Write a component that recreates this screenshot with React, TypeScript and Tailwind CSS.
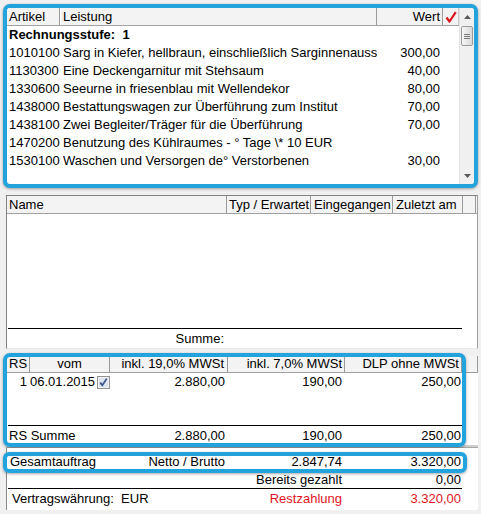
import React from 'react';

type Item = { code: string; text: string; value: string };

const items: Item[] = [
  { code: '1010100', text: 'Sarg in Kiefer, hellbraun, einschließlich Sarginnenausstattung', value: '300,00' },
  { code: '1130300', text: 'Eine Deckengarnitur mit Stehsaum', value: '40,00' },
  { code: '1330600', text: 'Seeurne in friesenblau mit Wellendekor', value: '80,00' },
  { code: '1438000', text: 'Bestattungswagen zur Überführung zum Institut', value: '70,00' },
  { code: '1438100', text: 'Zwei Begleiter/Träger für die Überführung', value: '70,00' },
  { code: '1470200', text: 'Benutzung des Kühlraumes - ° Tage \\* 10 EUR', value: '' },
  { code: '1530100', text: 'Waschen und Versorgen de° Verstorbenen', value: '30,00' },
];

const RedCheck = () => (
  <svg width="12" height="12" viewBox="0 0 12 12">
    <path d="M1.5 6.5 L4.5 10.5 L10.8 1.2" fill="none" stroke="#e0141e" strokeWidth="2.2" strokeLinejoin="round" />
  </svg>
);

const BoxCheck = () => (
  <svg width="13" height="13" viewBox="0 0 13 13">
    <rect x="0.5" y="0.5" width="12" height="12" fill="#f6f6f6" stroke="#8e8f8f" />
    <rect x="2" y="2" width="9" height="9" fill="#dde4ee" />
    <path d="M3.2 6.6 L5.4 9.2 L9.8 2.6" fill="none" stroke="#3d5492" strokeWidth="1.8" />
  </svg>
);

const VScroll = () => (
  <div className="w-[15px] flex flex-col bg-[#f0f0f0] border-l border-[#e3e3e3]">
    <div className="h-[17px] flex items-center justify-center">
      <svg width="7" height="4" viewBox="0 0 7 4">
        <path d="M0 4 L3.5 0 L7 4Z" fill="#5a5a5a" />
      </svg>
    </div>
    <div className="mx-[1px] mt-[1px] h-[20px] rounded-[2px] border border-[#9a9a9a] bg-gradient-to-r from-[#f6f6f6] to-[#d9d9d9] flex flex-col items-center justify-center gap-[1px]">
      <div className="w-[6px] h-px bg-[#7b7b7b]" />
      <div className="w-[6px] h-px bg-[#7b7b7b]" />
      <div className="w-[6px] h-px bg-[#7b7b7b]" />
    </div>
    <div className="flex-1" />
    <div className="h-[17px] flex items-center justify-center">
      <svg width="7" height="4" viewBox="0 0 7 4">
        <path d="M0 0 L3.5 4 L7 0Z" fill="#5a5a5a" />
      </svg>
    </div>
  </div>
);

export default function App() {
  return (
    <div className="w-[481px] h-[514px] bg-[#f0f0f0] text-[13px] text-black font-['Liberation_Sans','Arial',sans-serif] flex flex-col overflow-hidden">
      {/* Leistungen */}
      <div className="ml-[3px] mt-[4px] w-[475px] h-[184px] rounded-[7px] border-4 border-[#22a3dd] bg-white flex overflow-hidden shadow-[0_1px_3px_rgba(0,0,0,0.35)]">
        <div className="flex-1 flex flex-col min-w-0">
          <div className="flex h-[18px] leading-[17px] bg-[#f3f3f3] border-b border-[#a0a0a0]">
            <div className="w-[53px] pl-[2px] border-r border-[#9a9a9a]">Artikel</div>
            <div className="w-[317px] pl-[2px] border-r border-[#9a9a9a] border-l border-l-white">Leistung</div>
            <div className="w-[66px] pr-[2px] text-right border-r border-[#9a9a9a]">Wert</div>
            <div className="flex-1 flex items-center justify-center border-r border-[#c8c8c8]">
              <RedCheck />
            </div>
          </div>
          <div className="h-[18px] leading-[18px] pl-[2px] font-bold whitespace-pre">Rechnungsstufe:  1</div>
          {items.map((it) => (
            <div key={it.code} className="flex h-[18px] leading-[18px] whitespace-nowrap">
              <div className="w-[56px] pl-[2px]">{it.code}</div>
              <div className="w-[314px] overflow-hidden">{it.text}</div>
              <div className="w-[63px] text-right">{it.value}</div>
            </div>
          ))}
        </div>
        <VScroll />
      </div>

      {/* Dokumente */}
      <div className="ml-[6px] mt-[7px] w-[472px] h-[154px] flex flex-col bg-white border border-[#828282] border-r-[#a0a0a0] border-b-[#e8e8e8]">
        <div className="flex h-[18px] leading-[17px] bg-[#f3f3f3] border-b border-[#a0a0a0] whitespace-nowrap">
          <div className="w-[220px] pl-[2px] border-r border-[#9a9a9a]">Name</div>
          <div className="w-[84px] pl-[2px] border-r border-[#9a9a9a]">Typ / Erwartet</div>
          <div className="w-[82px] pl-[3px] border-r border-[#9a9a9a]">Eingegangen</div>
          <div className="w-[70px] pl-[3px] border-r border-[#9a9a9a]">Zuletzt am</div>
          <div className="w-[13px] border-r border-[#9a9a9a]" />
          <div className="flex-1" />
        </div>
        <div className="flex-1" />
        <div className="ml-[1px] w-[454px] h-px bg-black" />
        <div className="h-[19px] leading-[19px] flex">
          <div className="w-[219px] pr-[2px] text-right">Summe:</div>
        </div>
      </div>

      {/* Rechnungsstufen */}
      <div className="relative ml-[6px] mt-[3px] w-[472px]">
        <div className="h-[4px]" />
        <div className="border-l border-[#828282] bg-white">
          <div className="flex h-[17px] leading-[16px] bg-[#f3f3f3] border-b border-[#a0a0a0] whitespace-nowrap">
            <div className="w-[23px] pl-[2px] border-r border-[#9a9a9a]">RS</div>
            <div className="w-[80px] text-center border-r border-[#9a9a9a]">vom</div>
            <div className="w-[118px] pr-[3px] text-right border-r border-[#9a9a9a]">inkl. 19,0% MWSt</div>
            <div className="w-[117px] pr-[2px] text-right border-r border-[#9a9a9a]">inkl. 7,0% MWSt</div>
            <div className="w-[117px] pr-[2px] text-right border-r border-[#9a9a9a]">DLP ohne MWSt</div>
            <div className="flex-1 border-r border-[#9a9a9a]" />
          </div>
          <div className="flex h-[18px] leading-[18px] whitespace-nowrap">
            <div className="w-[23px] pr-[3px] text-right">1</div>
            <div className="w-[80px] flex items-center gap-[2px]">
              <span>06.01.2015</span>
              <BoxCheck />
            </div>
            <div className="w-[118px] pr-[3px] text-right">2.880,00</div>
            <div className="w-[117px] pr-[3px] text-right">190,00</div>
            <div className="w-[117px] pr-[1px] text-right">250,00</div>
          </div>
          <div className="h-[34px]" />
          <div className="ml-[1px] w-[454px] h-px bg-black" />
          <div className="flex h-[19px] leading-[19px] whitespace-nowrap">
            <div className="w-[221px] flex justify-between pl-[2px] pr-[3px]">
              <span>RS Summe</span>
              <span>2.880,00</span>
            </div>
            <div className="w-[117px] pr-[3px] text-right">190,00</div>
            <div className="w-[117px] pr-[1px] text-right">250,00</div>
          </div>
        </div>
        <div className="h-[3px] bg-[#cfcfcf] border-b border-[#a8a8a8]" />
        <div className="pointer-events-none absolute -left-[3px] top-[1px] w-[463px] h-[94px] rounded-[7px] border-4 border-[#22a3dd] shadow-[0_1px_3px_rgba(0,0,0,0.35)]" />
      </div>

      {/* Gesamtauftrag */}
      <div className="relative ml-[6px] w-[472px] h-[62px] bg-white border-l border-[#8a8a8a] whitespace-nowrap">
        <div className="h-[5px]" />
        <div className="flex h-[18px] leading-[18px]">
          <div className="w-[221px] flex justify-between pl-[3px] pr-[3px]">
            <span>Gesamtauftrag</span>
            <span>Netto / Brutto</span>
          </div>
          <div className="w-[117px] pr-[3px] text-right">2.847,74</div>
          <div className="w-[117px] pr-[1px] text-right">3.320,00</div>
        </div>
        <div className="flex h-[17px] leading-[17px]">
          <div className="w-[221px]" />
          <div className="w-[117px] pr-[3px] text-right">Bereits gezahlt</div>
          <div className="w-[117px] pr-[1px] text-right">0,00</div>
        </div>
        <div className="ml-[1px] w-[454px] h-px bg-black" />
        <div className="flex h-[19px] leading-[19px]">
          <div className="w-[221px] pl-[5px] whitespace-pre">Vertragswährung:  EUR</div>
          <div className="w-[117px] pr-[3px] text-right text-[#e0141e]">Restzahlung</div>
          <div className="w-[117px] pr-[1px] text-right text-[#e0141e]">3.320,00</div>
        </div>
        <div className="pointer-events-none absolute -left-[4px] top-[4px] w-[464px] h-[21px] rounded-[6px] border-4 border-[#22a3dd] shadow-[0_1px_3px_rgba(0,0,0,0.35)]" />
      </div>
    </div>
  );
}
